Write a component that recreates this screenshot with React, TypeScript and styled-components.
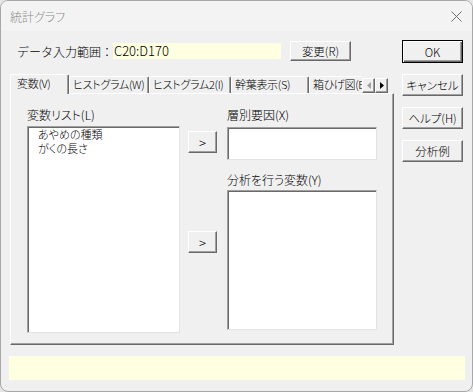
import styled, { createGlobalStyle, css } from "styled-components";

const GlobalStyle = createGlobalStyle`
  html, body {
    margin: 0;
    padding: 0;
    background: #e6e6e6;
  }
  body {
    font-family: "Noto Sans CJK JP", "Noto Sans", sans-serif;
    font-size: 12px;
    font-weight: 300;
    color: #000;
    font-feature-settings: "palt";
  }
  * { box-sizing: border-box; }
`;

const Window = styled.div`
  width: 473px;
  height: 392px;
  border: 1px solid #a8a8a8;
  border-radius: 8px;
  background: #f0f0f0;
  overflow: hidden;
  display: flex;
  flex-direction: column;
`;

const TitleBar = styled.div`
  height: 30px;
  background: #f3f3f3;
  display: flex;
  align-items: center;
  justify-content: space-between;
  padding: 0 10px 0 9px;
  color: #8c8c8c;
  font-size: 12px;
`;

const Content = styled.div`
  display: flex;
  flex-direction: column;
  padding: 9px 7px 0 8px;
`;

const MainRow = styled.div`
  display: flex;
  gap: 8px;
  padding-left: 1px;
`;

const LeftCol = styled.div`
  width: 384px;
  display: flex;
  flex-direction: column;
`;

const RightCol = styled.div`
  width: 61px;
  display: flex;
  flex-direction: column;
  gap: 11px;
`;

const RangeRow = styled.div`
  display: flex;
  align-items: center;
  height: 22px;
  padding-left: 7px;
`;

const RangeLabel = styled.div`
  width: 96px;
  font-size: 12px;
  white-space: nowrap;
  font-feature-settings: normal;
`;

const RangeField = styled.div`
  width: 168px;
  height: 16px;
  background: #ffffe1;
  font-size: 13px;
  line-height: 16px;
  padding-left: 1px;
`;

const Button = styled.button<{ $w: number; $h: number; $default?: boolean }>`
  width: ${(p) => p.$w}px;
  height: ${(p) => p.$h}px;
  padding: 0;
  background: #f0f0f0;
  font-family: inherit;
  font-weight: 300;
  font-feature-settings: "palt";
  font-size: 11.5px;
  color: #000;
  border: 1px solid;
  border-color: #fff #696969 #696969 #fff;
  box-shadow: inset -1px -1px #a0a0a0;
  flex-shrink: 0;
  white-space: nowrap;
  ${(p) =>
    p.$default &&
    css`
      border-color: #000;
      box-shadow: inset 1px 1px #fff, inset -1px -1px #696969, inset -2px -2px #a0a0a0;
    `}
`;

const ChangeButton = styled(Button)`
  margin-left: 9px;
`;

const TabStrip = styled.div`
  display: flex;
  align-items: flex-end;
  height: 20px;
  margin-top: 12px;
  margin-bottom: -1px;
  position: relative;
  z-index: 1;
`;

const TabViewport = styled.div`
  width: 352px;
  height: 20px;
  display: flex;
  align-items: flex-end;
  overflow: hidden;
`;

const Tab = styled.div<{ $w: number; $active?: boolean }>`
  flex-shrink: 0;
  width: ${(p) => p.$w}px;
  height: ${(p) => (p.$active ? 20 : 17)}px;
  margin-bottom: ${(p) => (p.$active ? 0 : 1)}px;
  background: #f0f0f0;
  border-top: 1px solid #fff;
  border-left: 1px solid #fff;
  border-right: 1px solid #696969;
  box-shadow: inset -1px 0 #a0a0a0;
  border-radius: 2px 2px 0 0;
  white-space: nowrap;
  overflow: hidden;
  font-size: 11px;
  letter-spacing: -0.3px;
  line-height: 15px;
  padding: ${(p) => (p.$active ? "1px 0 0 6px" : "0 0 0 3px")};
`;

const Arrows = styled.div`
  display: flex;
  margin-bottom: 1px;
`;

const ArrowButton = styled.div`
  width: 13px;
  height: 15px;
  background: #f0f0f0;
  border: 1px solid;
  border-color: #fff #696969 #696969 #fff;
  box-shadow: inset -1px -1px #a0a0a0;
  display: flex;
  align-items: center;
  justify-content: center;
`;

const Panel = styled.div`
  height: 252px;
  border: 1px solid;
  border-color: #fff #696969 #696969 #fff;
  box-shadow: inset -1px -1px #a0a0a0;
  display: flex;
  padding: 14px 0 0 16px;
`;

const Column = styled.div<{ $w: number; $ml?: number; $pt?: number }>`
  width: ${(p) => p.$w}px;
  margin-left: ${(p) => p.$ml ?? 0}px;
  padding-top: ${(p) => p.$pt ?? 0}px;
  display: flex;
  flex-direction: column;
`;

const FieldLabel = styled.div<{ $mt?: number }>`
  height: 14px;
  line-height: 14px;
  font-size: 12px;
  margin-top: ${(p) => p.$mt ?? 0}px;
  white-space: nowrap;
`;

const SunkenBox = styled.div<{ $h: number; $mt: number }>`
  height: ${(p) => p.$h}px;
  margin-top: ${(p) => p.$mt}px;
  background: #fff;
  border: 1px solid;
  border-color: #a0a0a0 #e3e3e3 #e3e3e3 #a0a0a0;
  box-shadow: inset 1px 1px #696969;
  padding: 0 0 0 10px;
`;

const ListItem = styled.div`
  height: 14px;
  line-height: 14px;
  font-size: 11px;
  white-space: nowrap;
`;

const MoveButton = styled(Button)<{ $mt?: number }>`
  margin-top: ${(p) => p.$mt ?? 0}px;
  font-size: 13px;
  line-height: 1;
`;

const BottomBar = styled.div`
  margin-top: 11px;
  height: 24px;
  width: 456px;
  background: #ffffe1;
`;

const CloseIcon = () => (
  <svg width="11" height="11" viewBox="0 0 11 11">
    <path d="M0.5 0.5 L10.5 10.5 M10.5 0.5 L0.5 10.5" stroke="#6e6e6e" strokeWidth="1" fill="none" />
  </svg>
);

const Triangle = ({ dir, color }: { dir: "left" | "right"; color: string }) => (
  <svg width="4" height="7" viewBox="0 0 4 7">
    {dir === "left" ? (
      <path d="M4 0 L0 3.5 L4 7 Z" fill={color} />
    ) : (
      <path d="M0 0 L4 3.5 L0 7 Z" fill={color} />
    )}
  </svg>
);

const tabs = [
  { label: "変数(V)", w: 59, active: true },
  { label: "ヒストグラム(W)", w: 80 },
  { label: "ヒストグラム2(I)", w: 82 },
  { label: "幹葉表示(S)", w: 78 },
  { label: "箱ひげ図(B)", w: 78 },
];

const App = () => {
  return (
    <>
      <GlobalStyle />
      <Window>
        <TitleBar>
          <span>統計グラフ</span>
          <CloseIcon />
        </TitleBar>
        <Content>
          <MainRow>
            <LeftCol>
              <RangeRow>
                <RangeLabel>データ入力範囲：</RangeLabel>
                <RangeField>C20:D170</RangeField>
                <ChangeButton $w={61} $h={20}>変更(R)</ChangeButton>
              </RangeRow>
              <TabStrip>
                <TabViewport>
                  {tabs.map((t) => (
                    <Tab key={t.label} $w={t.w} $active={t.active}>
                      {t.label}
                    </Tab>
                  ))}
                </TabViewport>
                <Arrows>
                  <ArrowButton>
                    <Triangle dir="left" color="#a0a0a0" />
                  </ArrowButton>
                  <ArrowButton>
                    <Triangle dir="right" color="#000" />
                  </ArrowButton>
                </Arrows>
              </TabStrip>
              <Panel>
                <Column $w={153}>
                  <FieldLabel>変数リスト(L)</FieldLabel>
                  <SunkenBox $h={207} $mt={4}>
                    <ListItem>あやめの種類</ListItem>
                    <ListItem>がくの長さ</ListItem>
                  </SunkenBox>
                </Column>
                <Column $w={29} $ml={8} $pt={23}>
                  <MoveButton $w={29} $h={22}>&gt;</MoveButton>
                  <MoveButton $w={29} $h={22} $mt={78}>&gt;</MoveButton>
                </Column>
                <Column $w={150} $ml={10}>
                  <FieldLabel>層別要因(X)</FieldLabel>
                  <SunkenBox $h={33} $mt={5} />
                  <FieldLabel $mt={13}>分析を行う変数(Y)</FieldLabel>
                  <SunkenBox $h={140} $mt={3} />
                </Column>
              </Panel>
            </LeftCol>
            <RightCol>
              <Button $w={61} $h={23} $default>OK</Button>
              <Button $w={61} $h={22}>キャンセル</Button>
              <Button $w={61} $h={22}>ヘルプ(H)</Button>
              <Button $w={61} $h={22}>分析例</Button>
            </RightCol>
          </MainRow>
          <BottomBar />
        </Content>
      </Window>
    </>
  );
};

export default App;
